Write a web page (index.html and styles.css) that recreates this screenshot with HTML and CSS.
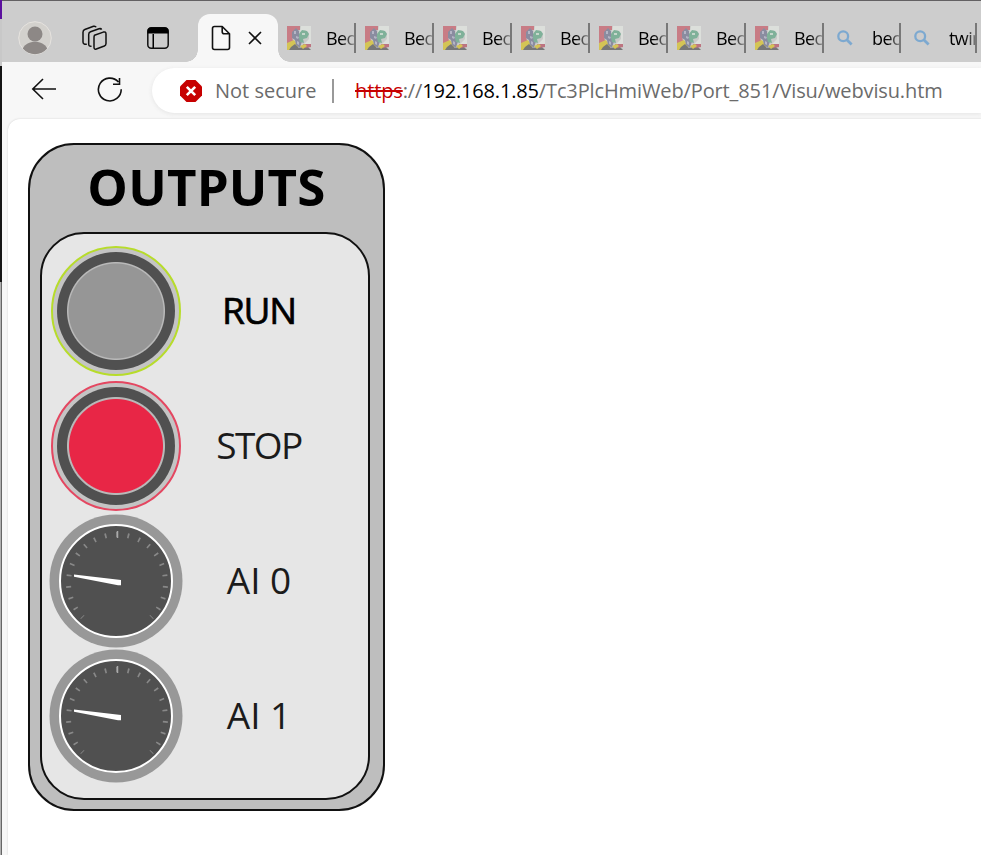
FILE: index.html
```html
<!DOCTYPE html>
<html lang="en">
<head>
<meta charset="utf-8">
<title>webvisu</title>
<link rel="stylesheet" href="styles.css">
</head>
<body>
<svg class="defs" width="0" height="0" aria-hidden="true">
  <symbol id="favicon" viewBox="0 0 24 24">
    <path fill="#c9cac8" d="M0 0h24v24H0z"/>
    <path fill="#c87c85" d="M0 0h13v4H9L5 10l1 5-6 3z"/>
    <path fill="#dcdfdb" d="M14 0h10v20l-7-2 5-5V7l-4-3-5 2z"/>
    <path fill="#d4c455" d="M0 17l7-3 4 6v4H0z"/>
    <path fill="#777" d="M4 21l4-3 4 4 8-2 4 4H2z"/>
    <path fill="#bd7480" d="M16 18h8v3l-6 1z"/>
    <path fill="#8a8ca0" d="M5 6l4-4 3 3v4l3 6-2 7-4-3-1-5-3-2z"/>
    <path fill="#b5b5c5" d="M7 5h2v3H7zM9 10l3 1-1 2-2-1zM10 15l2 1v3l-2-1z"/>
    <path fill="#7fb199" d="M12 8l3-4 5 1 2 3-2 4-4 1 1 4-4-1-1-4z"/>
    <path fill="#c6d7cb" d="M15 7h3v2h-3z"/>
    <path fill="#d4c455" d="M13 20l5-2 2 2-4 3z"/>
  </symbol>
  <symbol id="search" viewBox="0 0 16 16">
    <circle cx="6.200" cy="6.200" r="4.900" fill="none" stroke="#7da9d0" stroke-width="2.300"/>
    <path d="M9.800 9.800l4.800 4.600" stroke="#7da9d0" stroke-width="2.800"/>
  </symbol>
  <symbol id="dial" viewBox="0 0 134 134">
    <circle cx="67" cy="67" r="66.500" fill="#989898"/>
    <circle cx="67" cy="67" r="56" fill="#505050" stroke="#fff" stroke-width="2"/>
    <path d="M33.700 103.300A48.500 48.500 0 1 1 102.300 103.300" fill="none" stroke="#888" stroke-width="5" pathLength="270" stroke-dasharray="2 11.500" stroke-dashoffset="1"/>
    <path d="M68.500 17v7" stroke="#aaa" stroke-width="1.500"/>
    <path d="M25 60.500l47 5.500v5.200h-3L25 62.800z" fill="#fff"/>
  </symbol>
</svg>
<div class="screen">
  <div class="desktop-edge"><i class="purple"></i><i class="pale"></i><i class="black"></i></div>
  <div class="window">
    <header class="tabstrip">
      <div class="actions">
        <svg class="avatar" viewBox="0 0 34 34"><circle cx="17" cy="17" r="16.300" fill="#d3d1cd" stroke="#e6e3df"/><circle cx="17" cy="13" r="7.500" fill="#8d8886"/><path fill="#8d8886" d="M4.800 27.500c2-4.500 7-6.800 12.200-6.800s10.200 2.300 12.200 6.800A16 16 0 0 1 4.800 27.500z"/></svg>
        <svg class="stack" viewBox="0 0 26 26" fill="none" stroke="#111" stroke-width="1.500"><path d="M12.500 10.300l8.800-3.200q2.700-.7 2.700 1.800v9.500q0 1.800-1.700 2.600l-8 3q-2.300.7-2.300-1.700v-9.500q0-1.800.5-2.500z" stroke-linejoin="round"/><path d="M9.500 21.200q-2.800.4-2.800-2V9.500q0-2 1.800-2.700l8.500-3q2-.6 2.600.8M4.800 19.200Q1 19.600 1 17V7.200q0-2 1.800-2.700L11.500 1.300q2-.5 2.600 1"/></svg>
        <svg class="pane" viewBox="0 0 22 22"><rect x=".8" y=".8" width="20.400" height="20.400" rx="3.500" fill="none" stroke="#111" stroke-width="1.500"/><path d="M.5 6.500V4Q.5.500 4 .5h14q3.500 0 3.500 3.500v2.500zM5.500 6v15h1.500V6z"/></svg>
      </div>
      <div class="tab-active">
        <svg class="page-icon" viewBox="0 0 20 26" fill="none" stroke="#111" stroke-width="1.600" stroke-linejoin="round"><path d="M3.500 1.500h7.700l7.300 7.300v13.700q0 2-2 2h-13q-2 0-2-2v-19q0-2 2-2z"/><path d="M11.200 1.500v5.300q0 2 2 2h5.300"/></svg>
        <svg class="close" viewBox="0 0 14 14"><path d="M1 1l12 12M13 1L1 13" stroke="#111" stroke-width="1.600"/></svg>
      </div>
      <div class="tabs">
        <div class="tab"><svg class="fav"><use href="#favicon"/></svg><span>Bec</span></div>
        <div class="tab"><svg class="fav"><use href="#favicon"/></svg><span>Bec</span></div>
        <div class="tab"><svg class="fav"><use href="#favicon"/></svg><span>Bec</span></div>
        <div class="tab"><svg class="fav"><use href="#favicon"/></svg><span>Bec</span></div>
        <div class="tab"><svg class="fav"><use href="#favicon"/></svg><span>Bec</span></div>
        <div class="tab"><svg class="fav"><use href="#favicon"/></svg><span>Bec</span></div>
        <div class="tab"><svg class="fav"><use href="#favicon"/></svg><span>Bec</span></div>
        <div class="tab narrow"><svg class="mag"><use href="#search"/></svg><span>bec</span></div>
        <div class="tab last"><svg class="mag"><use href="#search"/></svg><span>twin</span></div>
      </div>
    </header>
    <div class="toolbar">
      <svg class="back" viewBox="0 0 26 22" fill="none" stroke="#111" stroke-width="1.600"><path d="M25 11H2M12 1L1.800 11 12 21"/></svg>
      <svg class="reload" viewBox="0 0 26 26" fill="none" stroke="#111" stroke-width="1.600"><path d="M21.400 5A11.400 11.400 0 1 0 24.200 12.200M22.500 1v6.300h-6.500"/></svg>
      <div class="address">
        <svg class="warn" viewBox="0 0 22 22"><path fill="#c70000" d="M6.500 0h9L22 6.500v9L15.500 22h-9L0 15.500v-9z"/><path d="M6.800 6.800l8.400 8.400M15.200 6.800l-8.400 8.400" stroke="#fff" stroke-width="2.600"/></svg>
        <span class="notsecure">Not secure</span>
        <i class="divider"></i>
        <span class="url"><s>https</s>://<b>192.168.1.85</b><span class="path">/Tc3PlcHmiWeb/Port_851/Visu/webvisu.htm</span></span>
      </div>
    </div>
    <main class="page">
      <section class="panel">
        <h1>OUTPUTS</h1>
        <div class="inner">
          <div class="row"><div class="lamp run"><i></i></div><span class="label strong">RUN</span></div>
          <div class="row"><div class="lamp stop"><i></i></div><span class="label stoptext">STOP</span></div>
          <div class="row"><svg class="dial"><use href="#dial"/></svg><span class="label ai">AI 0</span></div>
          <div class="row"><svg class="dial"><use href="#dial"/></svg><span class="label ai">AI 1</span></div>
        </div>
      </section>
    </main>
  </div>
</div>
</body>
</html>
```
FILE: styles.css
```css
* { box-sizing: border-box; }
body { margin: 0; overflow: hidden; font-family: "Open Sans", "Noto Sans", sans-serif; color: #000; }
svg { display: block; flex: none; }
.defs { position: absolute; }
.screen { display: flex; width: 981px; height: 855px; }
.desktop-edge { width: 2px; flex: none; display: flex; flex-direction: column; background: #b0b0b0; border-right: 1px solid #666; }
.desktop-edge i { width: 2px; }
.purple { height: 19px; background: #5b109e; }
.pale { height: 47px; background: #c8c8c8; }
.black { height: 216px; background: #151515; }
.window { flex: 1; min-width: 0; display: flex; flex-direction: column; background: #f7f7f7; border-top: 1px solid #636163; }
.tabstrip { height: 61px; flex: none; display: flex; background: #cdcdcd; overflow: hidden; }
.actions { width: 196px; flex: none; display: flex; align-items: flex-start; padding: 20px 0 0 16px; }
.avatar { width: 34px; height: 34px; }
.stack { width: 26px; height: 26px; margin: 4px 0 0 30px; }
.pane { width: 22px; height: 22px; margin: 6px 0 0 39px; }
.tab-active { position: relative; width: 80px; flex: none; margin-top: 13px; height: 48px; display: flex; background: #f7f7f7; border-radius: 12px 12px 0 0; padding: 12px 0 0 13px; }
.tab-active::before, .tab-active::after { content: ""; position: absolute; bottom: 0; width: 12px; height: 12px; }
.tab-active::before { left: -12px; background: radial-gradient(circle at 0 0, transparent 11.500px, #f7f7f7 12px); }
.tab-active::after { right: -12px; background: radial-gradient(circle at 100% 0, transparent 11.500px, #f7f7f7 12px); }
.page-icon { width: 20px; height: 26px; margin-top: -1px; }
.close { width: 14px; height: 14px; margin: 5px 0 0 17px; }
.tabs { display: flex; }
.tab { position: relative; width: 78px; height: 61px; flex: none; display: flex; overflow: hidden; padding-left: 9px; }
.tab::after { content: ""; position: absolute; right: 0; top: 22px; width: 2px; height: 30px; background: #787878; }
.tab span { width: 28px; overflow: hidden; margin: 24px 0 0 15px; font-size: 18px; line-height: 26px; letter-spacing: -.6px; white-space: nowrap; -webkit-mask-image: linear-gradient(90deg, #000 55%, transparent 120%); mask-image: linear-gradient(90deg, #000 55%, transparent 120%); }
.tab.narrow { width: 77px; padding-left: 13px; }
.tab.last { width: 76px; padding-left: 13px; }
.tab .fav { width: 24px; height: 24px; margin-top: 25px; }
.tab .mag { width: 16px; height: 16px; margin-top: 29px; }
.tab.narrow span, .tab.last span { margin-left: 19px; }
.toolbar { height: 57px; flex: none; display: flex; }
.back { width: 26px; height: 22px; margin: 16px 0 0 29px; }
.reload { width: 26px; height: 26px; margin: 15px 0 0 40px; }
.address { flex: 1; height: 45px; margin: 6px 0 0 29px; display: flex; align-items: center; background: #fff; border-radius: 23px 0 0 23px; box-shadow: 0 1px 4px #e4e4e4; padding-left: 28px; font-size: 20px; color: #6b6b6b; white-space: nowrap; }
.warn { width: 22px; height: 22px; }
.notsecure { margin-left: 13px; width: 103px; }
.divider { width: 2px; height: 24px; background: #999; margin-left: 14px; }
.url { margin-left: 21px; letter-spacing: -.12px; }
.url s { color: #c70000; text-decoration-thickness: 2px; }
.url b { font-weight: 400; color: #000; letter-spacing: -.18px; }
.page { flex: 1; margin-left: 6px; background: #fff; border-radius: 12px 0 0; box-shadow: 0 0 2px #ccc; padding: 24px 0 0 20px; }
.panel { width: 357px; height: 668px; border: 2px solid #111; border-radius: 46px; background: #bebebe; padding: 0 10px; }
h1 { margin: 0; height: 87px; font-size: 51px; line-height: 82px; font-weight: 700; text-align: center; letter-spacing: .2px; }
.inner { width: 330px; height: 568px; border: 2px solid #111; border-radius: 44px; background: #e6e6e6; padding: 9.500px 0 0 7px; }
.row { height: 135px; display: flex; align-items: center; }
.lamp { width: 130px; height: 130px; margin: 0 2px; border-radius: 50%; border: 2.500px solid #b7dc2b; background: #c4c4c4; padding: 4px; }
.lamp i { display: block; width: 118px; height: 118px; border-radius: 50%; background: radial-gradient(circle, #969696 47px, #b9b9b9 48px, #b9b9b9 48.500px, #505050 49.500px); }
.stop { border: 2px solid #e44761; padding: 4px; }
.stop i { background: radial-gradient(circle, #e82646 46.500px, #b9b9b9 47.500px, #b9b9b9 48.500px, #505050 49.500px); }
.dial { width: 134px; height: 134px; }
.label { width: 152px; margin-top: -3px; text-align: center; font-size: 37px; line-height: 50px; color: #1b1b1b; white-space: nowrap; }
.strong { color: #000; letter-spacing: -1.200px; -webkit-text-stroke: .7px #000; }
.stoptext { letter-spacing: -1.500px; }
```
